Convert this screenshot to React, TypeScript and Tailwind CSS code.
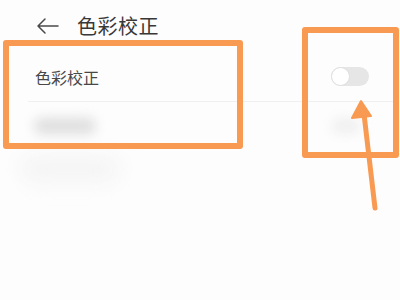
export default function App() {
  return (
    <div
      className="relative h-[300px] w-[400px] overflow-hidden bg-[#fdfdfd] text-[#333]"
      style={{ fontFamily: '"Noto Sans CJK SC", "Noto Sans", sans-serif' }}
    >
      {/* header */}
      <div className="flex h-[52px] items-center pl-[36px] pb-[1px]">
        <svg width="24" height="18" viewBox="0 0 24 18" fill="none" stroke="#4a4a4a" strokeWidth="1.5" strokeLinecap="round" strokeLinejoin="round">
          <path d="M22 9H2M9 2L2 9l7 7" />
        </svg>
        <span className="ml-[17px] text-[20px] leading-none tracking-[0.5px] text-[#383838]">色彩校正</span>
      </div>

      {/* list */}
      <div className="pl-[28px]">
        <div className="flex h-[49px] items-center justify-between pr-[31px] pl-[7px]">
          <span className="text-[16px] leading-none text-[#484848]">色彩校正</span>
          <div className="relative h-[19px] w-[38px] rounded-full bg-[#e6e6e6]">
            <div className="absolute left-0 top-0 h-[19px] w-[19px] rounded-full border border-[#e0e0e0] bg-white" />
          </div>
        </div>
        <div className="mr-[5px] h-px bg-[#f0f0f0]" />
        <div className="flex h-[48px] items-center justify-between pr-[40px] pl-[6px]">
          <div className="h-[16px] w-[62px] rounded-full bg-[#dedede] blur-[6px]" />
          <div className="h-[14px] w-[28px] rounded-full bg-[#eeeeee] blur-[6px]" />
        </div>
        <div className="ml-[-8px] mt-[4px] h-[30px] w-[100px] rounded-full bg-[#f5f5f5] blur-[9px]" />
      </div>

      {/* annotations */}
      <div className="absolute left-[3px] top-[40px] h-[109px] w-[240px] rounded-[3px] border-[6px] border-[#f89a52]" />
      <div className="absolute left-[302px] top-[27px] h-[131px] w-[97px] rounded-[3px] border-[6px] border-[#f89a52]" />
      <svg className="absolute left-0 top-0" width="400" height="300" viewBox="0 0 400 300">
        <path d="M375 208L364 114" stroke="#f89a52" strokeWidth="5" strokeLinecap="round" />
        <path d="M361 101L352 118L371 116Z" fill="#f89a52" stroke="#f89a52" strokeWidth="2" strokeLinejoin="round" />
      </svg>
    </div>
  );
}
